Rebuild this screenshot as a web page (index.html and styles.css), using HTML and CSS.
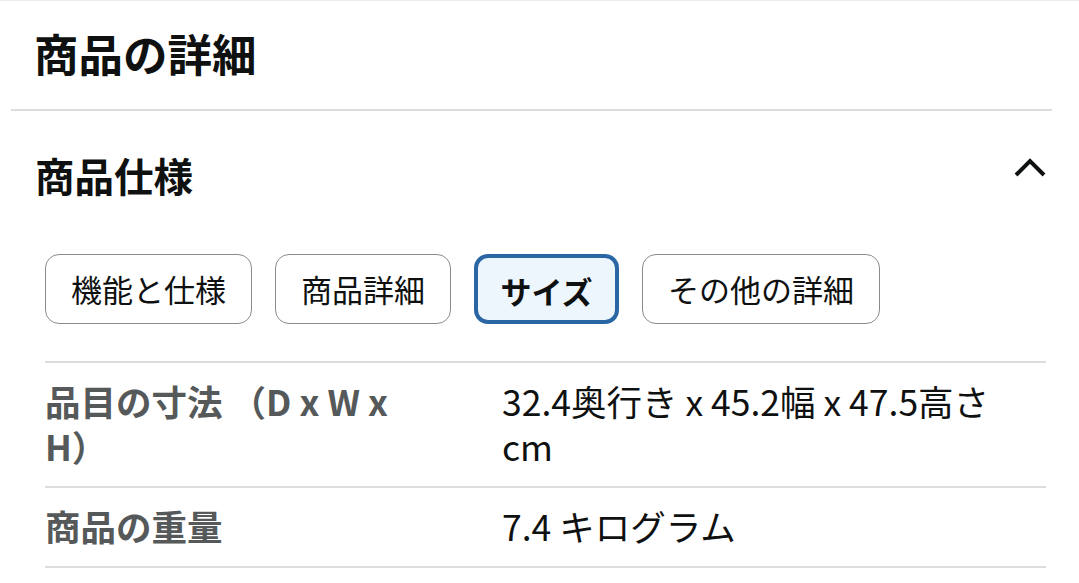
FILE: index.html
```html
<!DOCTYPE html>
<html lang="ja">
<head>
<meta charset="utf-8">
<link rel="stylesheet" href="styles.css">
</head>
<body>
<div class="page">
  <h1 class="title">商品の詳細</h1>
  <div class="divider"></div>
  <div class="section-head">
    <h2 class="section-title">商品仕様</h2>
    <svg class="chevron" width="34" height="24" viewBox="0 0 34 24"><path d="M3 20 L17 6 L31 20" fill="none" stroke="#0f1111" stroke-width="4"/></svg>
  </div>
  <div class="tabs">
    <button class="tab">機能と仕様</button>
    <button class="tab">商品詳細</button>
    <button class="tab tab-active">サイズ</button>
    <button class="tab">その他の詳細</button>
  </div>
  <div class="spec">
    <div class="row">
      <div class="label">品目の寸法 （D x W x H）</div>
      <div class="value">32.4奥行き x 45.2幅 x 47.5高さ cm</div>
    </div>
    <div class="row">
      <div class="label">商品の重量</div>
      <div class="value">7.4 キログラム</div>
    </div>
  </div>
</div>
</body>
</html>
```

FILE: styles.css
```css
html, body {
  margin: 0;
  padding: 0;
  background: #ffffff;
}
body {
  font-family: "Noto Sans CJK JP", "Noto Sans", sans-serif;
  color: #0f1111;
}
.page {
  border-top: 1px solid #ececec;
}
.title {
  margin: 0;
  padding: 22px 0 26px 34px;
  font-size: 44.5px;
  line-height: 60px;
  font-weight: 700;
}
.divider {
  height: 2px;
  background: #dddddd;
  margin: 0 27px 0 11px;
}
.section-head {
  display: flex;
  justify-content: space-between;
  align-items: center;
  padding: 39px 32px 0 35px;
}
.section-title {
  margin: 0;
  font-size: 39.5px;
  line-height: 50px;
  font-weight: 700;
}
.chevron {
  display: block;
  margin-bottom: 16px;
}
.tabs {
  display: flex;
  gap: 23px;
  margin-top: 54px;
  padding-left: 45px;
}
.tab {
  font-family: inherit;
  font-size: 31px;
  line-height: 66px;
  height: 70px;
  padding: 0 25px;
  border: 1.5px solid #888c8c;
  border-radius: 14px;
  background: #ffffff;
  color: #0f1111;
  white-space: nowrap;
}
.tab-active {
  border: 4px solid #2a66a3;
  padding: 0 22.5px;
  background: #edf6fd;
  font-weight: 700;
}
.spec {
  margin: 37px 33px 0 45px;
  border-top: 2px solid #dddddd;
}
.row {
  display: grid;
  grid-template-columns: 457px 1fr;
  border-bottom: 2px solid #dddddd;
  padding: 15px 0 18px;
  font-size: 35.5px;
  line-height: 45px;
}
.label {
  font-weight: 700;
  color: #565959;
  padding-right: 95px;
}
.value {
  color: #0f1111;
  padding-right: 30px;
}
```
